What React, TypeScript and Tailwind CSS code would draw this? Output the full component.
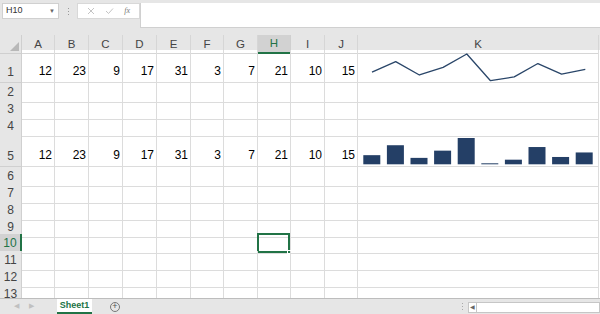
import React from "react";

const cols = ["A", "B", "C", "D", "E", "F", "G", "H", "I", "J", "K"];
const data = [12, 23, 9, 17, 31, 3, 7, 21, 10, 15];
// row heights in px, rows 1..13
const rowH = [33, 17, 17, 17, 33, 17, 17, 17, 16, 17, 17, 17, 17];

const font = { fontFamily: "'Liberation Sans', Arial, sans-serif" };

function LineSpark() {
    const pts = data.map((v, i) => `${14 + i * 23.7},${4 + (31 - v) * 0.954}`).join(" ");
    return (
        <svg width="240" height="32" className="absolute left-0 top-0">
            <polyline points={pts} fill="none" stroke="#2a4669" strokeWidth="1.3" strokeLinejoin="round" />
        </svg>
    );
}

function BarSpark() {
    return (
        <svg width="240" height="32" className="absolute left-0 top-0">
            {data.map((v, i) => {
                const h = 1 + ((v - 3) / 28) * 25.3;
                return <rect key={i} x={5.3 + i * 23.6} y={30.3 - h} width="17" height={h} fill="#243f66" />;
            })}
        </svg>
    );
}

export default function App() {
    return (
        <div className="w-[600px] h-[314px] overflow-hidden bg-white flex flex-col text-[#222]" style={font}>
            {/* formula bar */}
            <div className="h-[35px] bg-[#e6e6e6] flex items-start pt-[3px] shrink-0">
                <div className="ml-[2px] w-[57px] h-[16px] bg-white border border-[#d0d0d0] flex items-center justify-between px-[3px] text-[9px] text-[#333]">
                    <span>H10</span>
                    <span className="text-[6px] text-[#666]">▼</span>
                </div>
                <div className="w-[18px] h-[16px] flex flex-col items-center justify-center gap-[2px]">
                    <span className="w-[1px] h-[1px] bg-[#999]" />
                    <span className="w-[1px] h-[1px] bg-[#999]" />
                    <span className="w-[1px] h-[1px] bg-[#999]" />
                </div>
                <div className="w-[63px] h-[16px] bg-white border border-[#d8d8d8] flex items-center justify-around px-[4px] text-[#c2c2c2]">
                    <svg width="8" height="8" viewBox="0 0 8 8"><path d="M1 1L7 7M7 1L1 7" stroke="#c4c4c4" strokeWidth="1" /></svg>
                    <svg width="9" height="8" viewBox="0 0 9 8"><path d="M1 4L3.5 6.5L8 1.5" stroke="#c4c4c4" strokeWidth="1" fill="none" /></svg>
                    <span className="text-[8px] italic text-[#777]" style={{ fontFamily: "'Liberation Serif', serif" }}>fx</span>
                </div>
                <div className="flex-1 h-[25px] bg-white border-l border-b border-[#d0d0d0]" />
            </div>

            {/* sheet grid */}
            <div className="h-[263px] overflow-hidden shrink-0">
                <div className="grid grid-cols-[22px_33px_34px_34px_34px_34px_33px_34px_33px_34px_33px_241px] h-[15px] bg-[#e6e6e6]">
                    <div className="relative border-r border-b border-[#cfcfcf]">
                        <div className="absolute right-[2px] bottom-[2px] w-0 h-0 border-l-[9px] border-l-transparent border-b-[9px] border-b-[#b8b8b8]" />
                    </div>
                    {cols.map((c) =>
                        c === "H" ? (
                            <div key={c} className="bg-[#d2d2d2] border-r border-[#cfcfcf] border-b-2 border-b-[#217346] text-[#217346] text-[11.5px] flex items-center justify-center">{c}</div>
                        ) : (
                            <div key={c} className="border-r border-b border-[#d6d6d6] text-[#444] text-[11.5px] flex items-center justify-center">{c}</div>
                        )
                    )}
                </div>
                {rowH.map((h, r) => {
                    const rowNum = r + 1;
                    const hasData = rowNum === 1 || rowNum === 5;
                    const sel = rowNum === 10;
                    return (
                        <div key={r} className="grid grid-cols-[22px_33px_34px_34px_34px_34px_33px_34px_33px_34px_33px_241px]" style={{ height: h }}>
                            {sel ? (
                                <div className="bg-[#d2d2d2] border-b border-[#cfcfcf] border-r-2 border-r-[#217346] text-[#217346] text-[12px] flex items-end justify-center pb-[1px]">{rowNum}</div>
                            ) : (
                                <div className="bg-[#e6e6e6] border-r border-b border-[#d0d0d0] text-[#444] text-[12px] flex items-end justify-center pb-[1px]">{rowNum}</div>
                            )}
                            {cols.map((c, ci) => {
                                const isSel = sel && c === "H";
                                return (
                                    <div key={c} className="relative border-r border-b border-[#dcdcdc] flex items-end justify-end pr-[2px] pb-[2px] text-[12px] text-black">
                                        {hasData && ci < 10 ? data[ci] : null}
                                        {rowNum === 1 && c === "K" ? <LineSpark /> : null}
                                        {rowNum === 5 && c === "K" ? <BarSpark /> : null}
                                        {isSel ? (
                                            <div className="absolute -left-[1px] -top-[1px] -right-[0px] -bottom-[0px] border-2 border-[#217346]">
                                                <div className="absolute -right-[3px] -bottom-[3px] w-[4px] h-[4px] bg-[#217346] border border-white" />
                                            </div>
                                        ) : null}
                                    </div>
                                );
                            })}
                        </div>
                    );
                })}
            </div>

            {/* sheet tabs */}
            <div className="flex-1 bg-[#e6e6e6] border-t border-[#bdbdbd] flex items-start relative">
                <div className="w-[57px] h-[15px] flex items-center text-[7px] text-[#c0c0c0]">
                    <span className="ml-[14px]">◀</span>
                    <span className="ml-[10px]">▶</span>
                </div>
                <div className="w-[35px] h-[15px] bg-white border-b-2 border-[#217346] flex items-center justify-center text-[9px] font-bold text-[#217346]">Sheet1</div>
                <div className="ml-[18px] h-[15px] flex items-center">
                    <div className="w-[10px] h-[10px] rounded-full border border-[#777] flex items-center justify-center text-[9px] leading-none text-[#555]">+</div>
                </div>
                <div className="flex-1" />
                <div className="w-[12px] h-[15px] flex flex-col items-center justify-center gap-[2px]">
                    <span className="w-[1px] h-[1px] bg-[#aaa]" />
                    <span className="w-[1px] h-[1px] bg-[#aaa]" />
                    <span className="w-[1px] h-[1px] bg-[#aaa]" />
                </div>
                <div className="mt-[3px] w-[132px] h-[11px] bg-white border border-[#c6c6c6] flex items-center">
                    <div className="w-[8px] h-full border-r border-[#c6c6c6] flex items-center justify-center text-[6px] text-[#666]">◀</div>
                </div>
            </div>
        </div>
    );
}
